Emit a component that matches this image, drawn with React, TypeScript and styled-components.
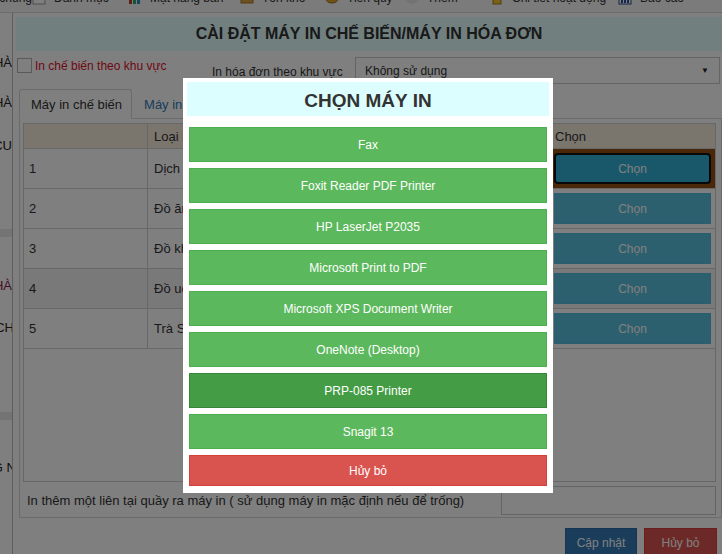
import styled, { createGlobalStyle } from "styled-components";

const GlobalStyle = createGlobalStyle`
  html, body {
    margin: 0;
    padding: 0;
    overflow: hidden;
    background: #ffffff;
  }
  * {
    box-sizing: border-box;
  }
`;

const Page = styled.div`
  position: relative;
  width: 722px;
  height: 554px;
  overflow: hidden;
  background: #fff;
  font-family: "Liberation Sans", Arial, sans-serif;
  color: #333;
`;

const Toolbar = styled.div`
  display: flex;
  align-items: center;
  height: 30px;
  margin-top: -17px;
  background: #f6f6f6;
  border-bottom: 1px solid #d6d6d6;
  font-size: 12px;
  color: #333;
`;

const ToolItem = styled.div<{ $w: number; $end?: boolean }>`
  display: flex;
  align-items: center;
  gap: 8px;
  width: ${(p) => p.$w}px;
  flex: none;
  overflow: hidden;
  white-space: nowrap;
  justify-content: ${(p) => (p.$end ? "flex-end" : "flex-start")};
`;

const Body = styled.div`
  display: flex;
`;

const Sidebar = styled.div`
  width: 13px;
  flex: none;
  border-right: 1px solid #bdbdbd;
  overflow: hidden;
  display: flex;
  flex-direction: column;
  font-size: 13px;
`;

const SideItem = styled.div<{ $h: number; $band?: boolean; $color?: string; $cut?: number }>`
  height: ${(p) => p.$h}px;
  flex: none;
  display: flex;
  align-items: center;
  justify-content: flex-end;
  white-space: nowrap;
  color: ${(p) => p.$color || "#222"};
  background: ${(p) => (p.$band ? "#e8e8e8" : "transparent")};

  span {
    margin-right: ${(p) => -(p.$cut || 0)}px;
  }
`;

const Main = styled.div`
  width: 709px;
  flex: none;
  padding: 4px 0 0 3px;
  display: flex;
  flex-direction: column;

  & > * {
    flex: none;
  }
`;

const TitleBand = styled.div`
  height: 34px;
  background: #e2ffff;
  display: flex;
  align-items: center;
  justify-content: center;
  font-size: 16px;
  font-weight: bold;
  color: #333;
`;

const FilterRow = styled.div`
  height: 38px;
  display: flex;
  align-items: flex-start;
  padding: 6px 0 0 1px;
  font-size: 12px;
`;

const CheckGroup = styled.label`
  width: 195px;
  display: flex;
  align-items: center;
  gap: 3px;
  margin-top: 1px;
  color: #e0102a;
`;

const CheckBox = styled.span`
  width: 15px;
  height: 15px;
  border: 1px solid #b5b5b5;
  background: #fff;
  flex: none;
`;

const FieldLabel = styled.div`
  width: 143px;
  height: 27px;
  display: flex;
  align-items: center;
  padding-top: 2px;
  color: #333;
`;

const Select = styled.div`
  width: 365px;
  height: 27px;
  border: 1px solid #c8c8c8;
  background: #fff;
  display: flex;
  align-items: center;
  justify-content: space-between;
  padding: 0 10px 0 9px;
  color: #333;
  font-size: 12px;
`;

const Caret = styled.span`
  font-size: 8px;
  color: #222;
`;

const TabsWrap = styled.div`
  margin-left: 3px;
  width: 703px;
  display: flex;
  flex-direction: column;
`;

const TabBar = styled.div`
  height: 30px;
  display: flex;
  align-items: flex-end;
  border-bottom: 1px solid #d6d6d6;
`;

const Tab = styled.div<{ $active?: boolean }>`
  height: 30px;
  padding: 0 9px 0 11px;
  display: flex;
  align-items: center;
  font-size: 13px;
  margin-bottom: -1px;
  color: ${(p) => (p.$active ? "#333" : "#337ab7")};
  background: ${(p) => (p.$active ? "#fff" : "transparent")};
  border: 1px solid ${(p) => (p.$active ? "#d6d6d6" : "transparent")};
  border-bottom-color: ${(p) => (p.$active ? "#fff" : "transparent")};
  border-radius: 3px 3px 0 0;
`;

const Pane = styled.div`
  height: 399px;
  border: 1px solid #d6d6d6;
  border-top: none;
  padding: 4px 4px 2px 3px;
  display: flex;
  flex-direction: column;

  & > * {
    flex: none;
  }
`;

const TableBox = styled.div`
  width: 693px;
  height: 359px;
  border: 1px solid #cfcfcf;
  display: flex;
  flex-direction: column;

  & > * {
    flex: none;
  }
`;

const Row = styled.div<{ $head?: boolean; $hover?: boolean }>`
  display: grid;
  grid-template-columns: 124px 250px 154px 163px;
  height: ${(p) => (p.$head ? 25 : 40)}px;
  background: ${(p) => (p.$head ? "#f4eadb" : p.$hover ? "#f3f3f3" : "#fff")};
  font-size: 13px;
`;

const Cell = styled.div<{ $pad?: number }>`
  display: flex;
  align-items: center;
  padding: 0 5px 0 ${(p) => p.$pad ?? 5}px;
  border-right: 1px solid #cfcfcf;
  border-bottom: 1px solid #cfcfcf;
  white-space: nowrap;
  overflow: hidden;
  &:last-child {
    border-right: none;
  }
`;

const PickCell = styled.div<{ $sel?: boolean }>`
  display: flex;
  align-items: center;
  padding: 0 4px 0 2px;
  border-bottom: 1px solid #cfcfcf;
  background: ${(p) => (p.$sel ? "#924f12" : "transparent")};
`;

const PickButton = styled.button<{ $focus?: boolean }>`
  width: 157px;
  height: 31px;
  font-family: "Liberation Sans", Arial, sans-serif;
  font-size: 12px;
  color: #fff;
  background: ${(p) => (p.$focus ? "#31b0d5" : "#5bc0de")};
  border: ${(p) => (p.$focus ? "2px solid #111" : "1px solid #54bcdc")};
  border-radius: ${(p) => (p.$focus ? "4px" : "0")};
`;

const ExtraRow = styled.div`
  margin-top: 4px;
  display: flex;
  align-items: center;
  justify-content: space-between;
  padding-left: 4px;
  width: 693px;
  font-size: 13px;
  color: #333;
`;

const TextInput = styled.div`
  width: 215px;
  height: 29px;
  border: 1px solid #c8c8c8;
  background: #fff;
`;

const Footer = styled.div`
  display: flex;
  justify-content: flex-end;
  gap: 7px;
  padding: 10px 5px 0 0;
`;

const ActionButton = styled.button<{ $tone: "primary" | "danger"; $w: number }>`
  width: ${(p) => p.$w}px;
  height: 30px;
  padding: 0;
  font-family: "Liberation Sans", Arial, sans-serif;
  font-size: 12px;
  color: #fff;
  background: ${(p) => (p.$tone === "primary" ? "#337ab7" : "#d9534f")};
  border: 1px solid ${(p) => (p.$tone === "primary" ? "#2e6da4" : "#d43f3a")};
  border-radius: 0;
`;

const Backdrop = styled.div`
  position: absolute;
  z-index: 50;
  top: 0;
  left: 0;
  width: 722px;
  height: 554px;
  background-color: rgba(0, 0, 0, 0.5);
`;

const Modal = styled.div`
  position: absolute;
  z-index: 60;
  left: 183px;
  top: 78px;
  width: 370px;
  height: 415px;
  background: #fff;
  padding: 4px;
  display: flex;
  flex-direction: column;
`;

const ModalTitle = styled.div`
  height: 34px;
  flex: none;
  background: #dcfefe;
  display: flex;
  align-items: center;
  justify-content: center;
  padding-top: 4px;
  font-size: 19px;
  font-weight: bold;
  color: #333;
`;

const PrinterList = styled.div`
  margin-top: 11px;
  padding: 0 2px;
  display: flex;
  flex-direction: column;
  gap: 6px;
`;

const PrinterButton = styled.button<{ $tone: "normal" | "active" | "cancel" }>`
  height: ${(p) => (p.$tone === "cancel" ? 31 : 35)}px;
  flex: none;
  width: 100%;
  font-family: "Liberation Sans", Arial, sans-serif;
  font-size: 12px;
  color: #fff;
  border-radius: 0;
  background: ${(p) =>
    p.$tone === "active" ? "#449d44" : p.$tone === "cancel" ? "#d9534f" : "#5cb85c"};
  border: 1px solid
    ${(p) => (p.$tone === "active" ? "#398439" : p.$tone === "cancel" ? "#d43f3a" : "#4cae4c")};
`;

const tools = [
  { w: 32, label: "Thông tin chung", end: true },
  { w: 96, label: "Danh mục", icon: "list" },
  { w: 112, label: "Mặt hàng bán", icon: "bars" },
  { w: 85, label: "Tồn kho", icon: "box" },
  { w: 80, label: "Tiền quỹ", icon: "coin" },
  { w: 85, label: "Thêm", icon: "circle" },
  { w: 128, label: "Chi tiết hoạt động", icon: "note" },
  { w: 104, label: "Báo cáo", icon: "chart" },
];

const ToolIcon = ({ kind }: { kind?: string }) => {
  if (!kind) return null;
  return (
    <svg width="14" height="14" viewBox="0 0 14 14">
      {kind === "list" && (
        <g>
          <rect x="1" y="1" width="12" height="12" fill="#fff" stroke="#999" />
          <line x1="3" y1="5" x2="11" y2="5" stroke="#888" />
          <line x1="3" y1="8" x2="11" y2="8" stroke="#888" />
        </g>
      )}
      {kind === "bars" && (
        <g>
          <rect x="1" y="2" width="3" height="11" fill="#c0392b" />
          <rect x="5" y="4" width="3" height="9" fill="#27ae60" />
          <rect x="9" y="1" width="3" height="12" fill="#2e86c1" />
        </g>
      )}
      {kind === "box" && <rect x="1" y="3" width="12" height="9" fill="#d9a441" stroke="#a6772a" />}
      {kind === "coin" && <ellipse cx="7" cy="8" rx="6" ry="4" fill="#e0a528" stroke="#9a6b12" />}
      {kind === "circle" && <circle cx="7" cy="7" r="6" fill="#e6e6e6" />}
      {kind === "note" && <rect x="3" y="1" width="8" height="12" fill="#f1c232" stroke="#a07d10" />}
      {kind === "chart" && (
        <g>
          <rect x="1" y="1" width="12" height="12" fill="#fff" stroke="#2b4c8c" />
          <rect x="3" y="6" width="2" height="6" fill="#2b4c8c" />
          <rect x="6" y="4" width="2" height="8" fill="#2b4c8c" />
          <rect x="9" y="7" width="2" height="5" fill="#2b4c8c" />
        </g>
      )}
    </svg>
  );
};

const sideItems = [
  { h: 29 },
  { h: 40, text: "THU NGÂN NHÀ" },
  { h: 40, text: "PHÒNG NHÀ" },
  { h: 46, text: "CẤU HÌNH CU" },
  { h: 61 },
  { h: 8, band: true },
  { h: 28 },
  { h: 40, text: "QUẢN LÝ NHÀ", color: "#8b1a4a" },
  { h: 44, text: "DANH SÁCH", cut: 2 },
  { h: 63 },
  { h: 8, band: true },
  { h: 27 },
  { h: 40, text: "HỆ THỐNG N", cut: 4 },
];

const rows = [
  { no: "1", type: "Dịch vụ" },
  { no: "2", type: "Đồ ăn" },
  { no: "3", type: "Đồ khô" },
  { no: "4", type: "Đồ uống" },
  { no: "5", type: "Trà Sữa" },
];

const printers = [
  "Fax",
  "Foxit Reader PDF Printer",
  "HP LaserJet P2035",
  "Microsoft Print to PDF",
  "Microsoft XPS Document Writer",
  "OneNote (Desktop)",
  "PRP-085 Printer",
  "Snagit 13",
];

export default function App() {
  return (
    <>
      <GlobalStyle />
      <Page>
        <Toolbar>
          {tools.map((t) => (
            <ToolItem key={t.label} $w={t.w} $end={t.end}>
              <ToolIcon kind={t.icon} />
              <span>{t.label}</span>
            </ToolItem>
          ))}
        </Toolbar>
        <Body>
          <Sidebar>
            {sideItems.map((s, i) => (
              <SideItem key={i} $h={s.h} $band={s.band} $color={s.color} $cut={s.cut}>
                {s.text && <span>{s.text}</span>}
              </SideItem>
            ))}
          </Sidebar>
          <Main>
            <TitleBand>CÀI ĐẶT MÁY IN CHẾ BIẾN/MÁY IN HÓA ĐƠN</TitleBand>
            <FilterRow>
              <CheckGroup>
                <CheckBox />
                <span>In chế biến theo khu vực</span>
              </CheckGroup>
              <FieldLabel>In hóa đơn theo khu vực</FieldLabel>
              <Select>
                <span>Không sử dụng</span>
                <Caret>▼</Caret>
              </Select>
            </FilterRow>
            <TabsWrap>
              <TabBar>
                <Tab $active>Máy in chế biến</Tab>
                <Tab>Máy in hóa đơn</Tab>
              </TabBar>
              <Pane>
                <TableBox>
                  <Row $head>
                    <Cell />
                    <Cell $pad={6}>Loại món</Cell>
                    <Cell>Máy in</Cell>
                    <Cell $pad={3}>Chọn</Cell>
                  </Row>
                  {rows.map((r, i) => (
                    <Row key={r.no} $hover={i === 3}>
                      <Cell>{r.no}</Cell>
                      <Cell $pad={6}>{r.type}</Cell>
                      <Cell />
                      <PickCell $sel={i === 0}>
                        <PickButton $focus={i === 0}>Chọn</PickButton>
                      </PickCell>
                    </Row>
                  ))}
                </TableBox>
                <ExtraRow>
                  <span>In thêm một liên tại quầy ra máy in ( sử dụng máy in mặc định nếu để trống)</span>
                  <TextInput />
                </ExtraRow>
              </Pane>
            </TabsWrap>
            <Footer>
              <ActionButton $tone="primary" $w={72}>
                Cập nhật
              </ActionButton>
              <ActionButton $tone="danger" $w={73}>
                Hủy bỏ
              </ActionButton>
            </Footer>
          </Main>
        </Body>
        <Backdrop />
        <Modal>
          <ModalTitle>CHỌN MÁY IN</ModalTitle>
          <PrinterList>
            {printers.map((p) => (
              <PrinterButton key={p} $tone={p === "PRP-085 Printer" ? "active" : "normal"}>
                {p}
              </PrinterButton>
            ))}
            <PrinterButton $tone="cancel">Hủy bỏ</PrinterButton>
          </PrinterList>
        </Modal>
      </Page>
    </>
  );
}
